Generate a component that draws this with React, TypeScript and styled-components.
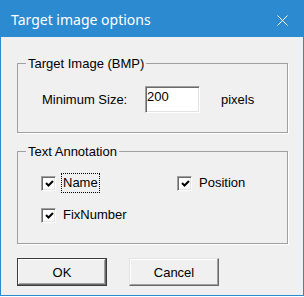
import styled, { createGlobalStyle } from "styled-components";

const GlobalStyle = createGlobalStyle`
  html, body {
    margin: 0;
    padding: 0;
    background: #ffffff;
  }
  * {
    box-sizing: border-box;
  }
`;

const CheckMark = () => (
  <svg width="11" height="11" viewBox="0 0 11 11">
    <polyline
      points="2,5 4.5,7.5 9,3"
      fill="none"
      stroke="#000"
      strokeWidth="2"
    />
  </svg>
);

const CloseIcon = () => (
  <svg width="11" height="11" viewBox="0 0 11 11">
    <path d="M0.5 0.5 L10.5 10.5 M10.5 0.5 L0.5 10.5" stroke="#fff" strokeWidth="1" />
  </svg>
);

const App = () => {
  return (
    <Window>
      <GlobalStyle />
      <TitleBar>
        <Title>Target image options</Title>
        <CloseButton>
          <CloseIcon />
        </CloseButton>
      </TitleBar>

      <Body>
        <Group>
          <Legend>Target Image (BMP)</Legend>
          <SizeRow>
            <FieldLabel>Minimum Size:</FieldLabel>
            <TextBox readOnly value="200" />
            <Unit>pixels</Unit>
          </SizeRow>
        </Group>

        <Group $second>
          <Legend>Text Annotation</Legend>
          <CheckGrid>
            <CheckItem>
              <Box>
                <CheckMark />
              </Box>
              <CheckText $focused>Name</CheckText>
            </CheckItem>
            <CheckItem>
              <Box>
                <CheckMark />
              </Box>
              <CheckText>Position</CheckText>
            </CheckItem>
            <CheckItem>
              <Box>
                <CheckMark />
              </Box>
              <CheckText>FixNumber</CheckText>
            </CheckItem>
          </CheckGrid>
        </Group>

        <ButtonRow>
          <Button $default>OK</Button>
          <Button>Cancel</Button>
        </ButtonRow>
      </Body>
    </Window>
  );
};

const Window = styled.div`
  width: 304px;
  height: 297px;
  display: flex;
  flex-direction: column;
  font-family: "Liberation Sans", Arial, sans-serif;
  font-size: 13px;
  color: #000;
`;

const TitleBar = styled.div`
  height: 37px;
  flex: 0 0 37px;
  background: #2b8ad0;
  display: flex;
  align-items: center;
  justify-content: space-between;
  padding: 0 16px 0 11px;
`;

const Title = styled.div`
  font-family: "Noto Sans", "Open Sans", sans-serif;
  font-size: 14px;
  color: #fff;
  padding-top: 1px;
`;

const CloseButton = styled.div`
  display: flex;
  width: 11px;
  height: 11px;
  margin-top: 3px;
`;

const Body = styled.div`
  flex: 1;
  background: #f0f0f0;
  border-left: 1px solid #2b8ad0;
  border-right: 1px solid #2b8ad0;
  border-bottom: 1px solid #2b8ad0;
  margin-bottom: 1px;
  padding: 19px 15px 0 16px;
  display: flex;
  flex-direction: column;
`;

const Group = styled.fieldset<{ $second?: boolean }>`
  margin: ${(p) => (p.$second ? "11px" : "0")} 0 0 0;
  padding: ${(p) => (p.$second ? "14px 0 18px 0" : "15px 0 19px 0")};
  border: 1px solid #a0a0a0;
  box-shadow: 1px 1px 0 #ffffff;
  min-width: 0;
`;

const Legend = styled.legend`
  margin-left: 8px;
  padding: 0 2px;
  line-height: 15px;
  font-size: 13px;
`;

const SizeRow = styled.div`
  display: flex;
  align-items: center;
  padding-left: 24px;
  height: 27px;
`;

const FieldLabel = styled.span`
  flex: 0 0 103px;
`;

const TextBox = styled.input`
  width: 55px;
  height: 27px;
  margin: 0;
  padding: 1px 2px 8px 1px;
  font-family: "Liberation Sans", Arial, sans-serif;
  font-size: 13px;
  line-height: 15px;
  color: #000;
  background: #fff;
  border-top: 1px solid #a0a0a0;
  border-left: 1px solid #a0a0a0;
  border-right: 1px solid #ffffff;
  border-bottom: 1px solid #ffffff;
  box-shadow: inset 1px 1px 0 #696969, inset -1px -1px 0 #e3e3e3;
  outline: none;
`;

const Unit = styled.span`
  margin-left: 21px;
`;

const CheckGrid = styled.div`
  display: grid;
  grid-template-columns: 136px 1fr;
  row-gap: 12px;
  padding-left: 23px;
`;

const CheckItem = styled.div`
  display: flex;
  align-items: center;
  height: 20px;
`;

const Box = styled.div`
  width: 15px;
  height: 15px;
  flex: 0 0 15px;
  background: #fff;
  border-top: 1px solid #a0a0a0;
  border-left: 1px solid #a0a0a0;
  border-right: 1px solid #ffffff;
  border-bottom: 1px solid #ffffff;
  box-shadow: inset 1px 1px 0 #696969, inset -1px -1px 0 #e3e3e3;
  display: flex;
  align-items: center;
  justify-content: center;
  padding: 1px 0 0 1px;
`;

const CheckText = styled.span<{ $focused?: boolean }>`
  margin-left: 5px;
  padding: 1px;
  line-height: 16px;
  border: 1px dotted ${(p) => (p.$focused ? "#000" : "transparent")};
`;

const ButtonRow = styled.div`
  display: flex;
  gap: 22px;
  margin-top: 14px;
`;

const Button = styled.button<{ $default?: boolean }>`
  width: 90px;
  height: 28px;
  margin: 0;
  padding: 0;
  font-family: "Liberation Sans", Arial, sans-serif;
  font-size: 13px;
  color: #000;
  background: #f0f0f0;
  border: 1px solid ${(p) => (p.$default ? "#3c3c3c" : "#e3e3e3")};
  box-shadow: ${(p) =>
    p.$default
      ? "inset -1px -1px 0 #696969, inset 1px 1px 0 #fff, inset -2px -2px 0 #a0a0a0"
      : "inset -1px -1px 0 #a0a0a0, inset 1px 1px 0 #fff"};
  ${(p) => (p.$default ? "" : "border-right-color: #696969; border-bottom-color: #696969;")}
`;

export default App;
